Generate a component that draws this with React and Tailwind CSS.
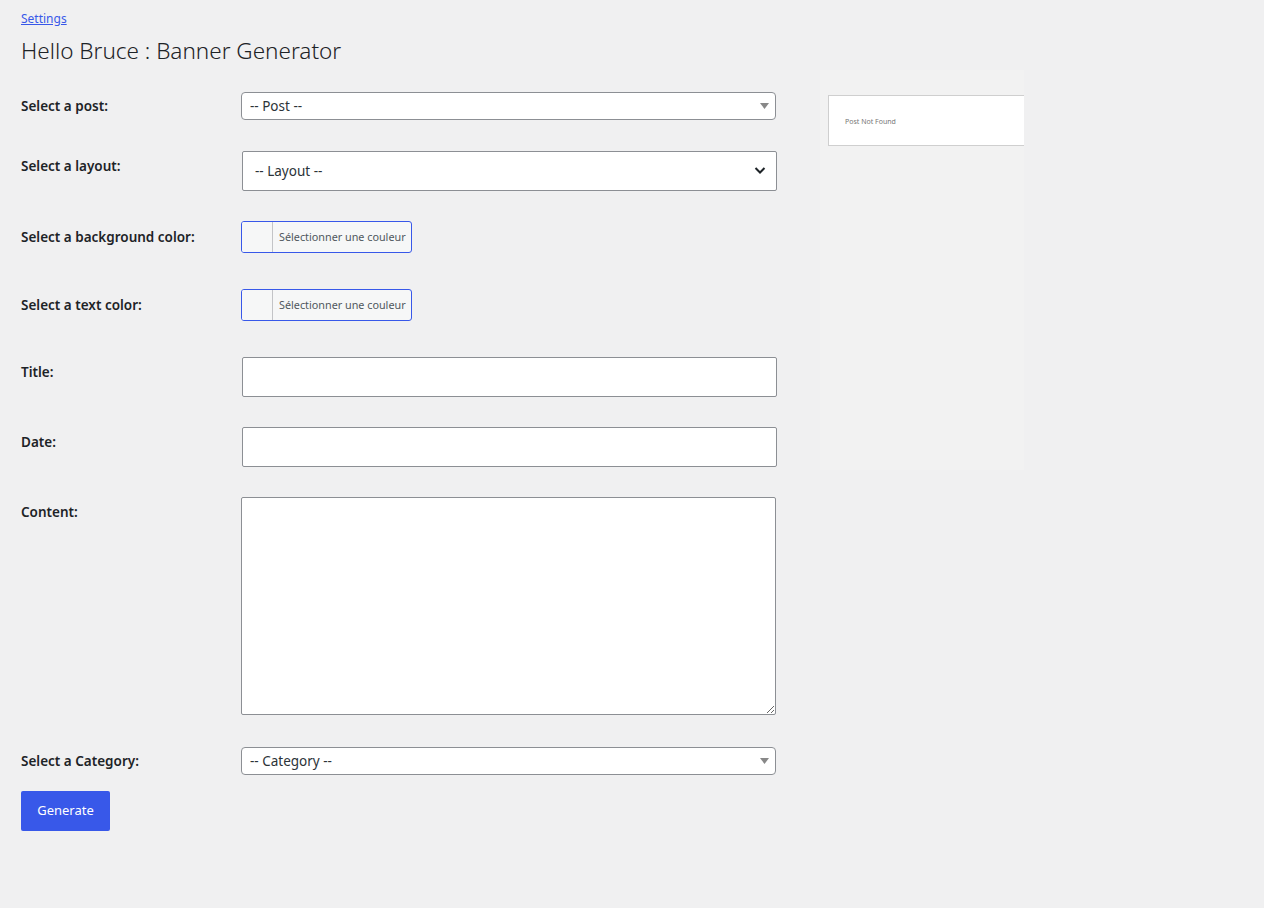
import { useState } from "react";

const font = { fontFamily: '"Noto Sans", "Open Sans", sans-serif' };

function Label({ children, className = "" }) {
  return (
    <div className={`w-[220px] shrink-0 text-[13.5px] font-semibold leading-5 text-[#1d2327] ${className}`}>
      {children}
    </div>
  );
}

function SmallSelect({ placeholder }) {
  return (
    <div className="relative w-[535px]">
      <select className="h-[28px] w-full appearance-none rounded-[4px] border border-[#8c8f94] bg-white pl-2 text-[13.5px] text-[#2c3338] outline-none">
        <option>{placeholder}</option>
      </select>
      <svg className="pointer-events-none absolute right-[7px] top-[11px]" width="9" height="6" viewBox="0 0 9 6">
        <path d="M0 0h9L4.5 6z" fill="#888" />
      </svg>
    </div>
  );
}

function ColorButton() {
  return (
    <button className="flex h-[32px] w-[171px] items-stretch overflow-hidden rounded-[3px] border border-[#3858e9] bg-[#f6f7f7] text-[10.8px] text-[#50575e]">
      <span className="w-[31px] border-r border-[#c3c4c7] bg-[#f6f7f7]" />
      <span className="flex items-center pl-[6px]">Sélectionner une couleur</span>
    </button>
  );
}

function TextInput({ value, onChange }) {
  return (
    <input
      value={value}
      onChange={(e) => onChange(e.target.value)}
      className="ml-px h-[40px] w-[535px] rounded-[2px] border border-[#8c8f94] bg-white px-3 text-[14px] outline-none"
    />
  );
}

export default function App() {
  const [title, setTitle] = useState("");
  const [date, setDate] = useState("");
  const [content, setContent] = useState("");

  return (
    <div className="min-h-[908px] bg-[#f0f0f1] pl-[21px] text-[#1d2327]" style={font}>
      <a href="#" className="block pt-[11px] text-[12px] leading-4 text-[#3858e9] underline">
        Settings
      </a>
      <h1 className="mt-[9px] text-[22.5px] font-light leading-[30px] text-[#1d2327]">
        Hello Bruce : Banner Generator
      </h1>

      <div className="flex items-start">
        {/* form column */}
        <div className="w-[756px] pt-[26px]">
          <div className="flex items-start">
            <Label className="pt-1">Select a post:</Label>
            <SmallSelect placeholder="-- Post --" />
          </div>

          <div className="mt-[31px] flex items-start">
            <Label className="pt-[5px]">Select a layout:</Label>
            <div className="relative ml-px w-[535px]">
              <select className="h-[40px] w-full appearance-none rounded-[2px] border border-[#8c8f94] bg-white pl-3 text-[13.5px] text-[#2c3338] outline-none">
                <option>-- Layout --</option>
              </select>
              <svg className="pointer-events-none absolute right-[11px] top-[15px]" width="12" height="9" viewBox="0 0 12 9">
                <path d="M1.5 2l4.5 4.5L10.5 2" fill="none" stroke="#1d2327" strokeWidth="2" />
              </svg>
            </div>
          </div>

          <div className="mt-[30px] flex items-start">
            <Label className="pt-[6px]">Select a background color:</Label>
            <ColorButton />
          </div>

          <div className="mt-[36px] flex items-start">
            <Label className="pt-[6px]">Select a text color:</Label>
            <ColorButton />
          </div>

          <div className="mt-[36px] flex items-start">
            <Label className="pt-[5px]">Title:</Label>
            <TextInput value={title} onChange={setTitle} />
          </div>

          <div className="mt-[30px] flex items-start">
            <Label className="pt-[5px]">Date:</Label>
            <TextInput value={date} onChange={setDate} />
          </div>

          <div className="mt-[30px] flex items-start">
            <Label className="pt-[5px]">Content:</Label>
            <textarea
              value={content}
              onChange={(e) => setContent(e.target.value)}
              className="block h-[218px] w-[535px] rounded-[2px] border border-[#8c8f94] bg-white p-2 text-[14px] outline-none"
            />
          </div>

          <div className="mt-[32px] flex items-start">
            <Label className="pt-1">Select a Category:</Label>
            <SmallSelect placeholder="-- Category --" />
          </div>

          <button className="mt-[16px] h-[40px] w-[89px] rounded-[2px] bg-[#3858e9] text-[13px] text-white">
            Generate
          </button>
        </div>

        {/* preview */}
        <div className="ml-[43px] mt-[4px] h-[400px] w-[204px] overflow-hidden bg-[#f2f2f2] pl-[8px] pt-[25px]">
          <div className="flex h-[51px] w-[200px] items-center border border-[#cfcfcf] bg-white pl-[16px] pt-[4px]">
            <span className="text-[7px] text-[#777]">Post Not Found</span>
          </div>
        </div>
      </div>
    </div>
  );
}
